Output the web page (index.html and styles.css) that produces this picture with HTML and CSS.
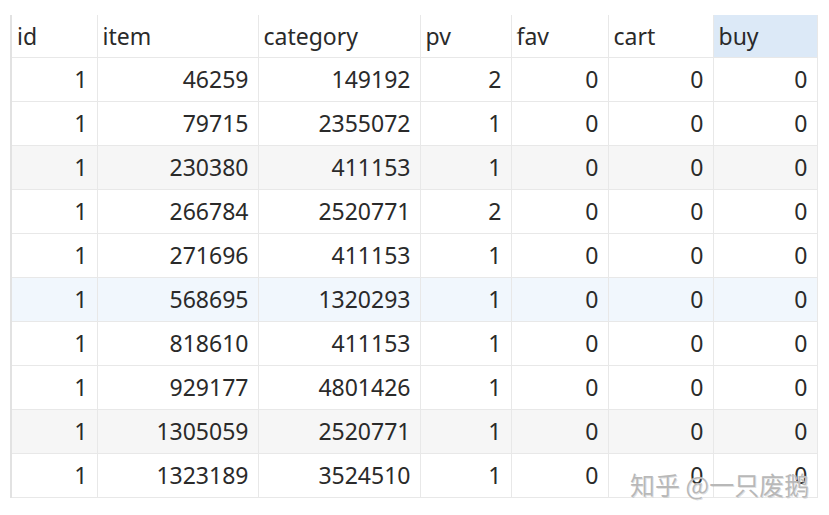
FILE: index.html
```html
<!DOCTYPE html>
<html lang="zh">
<head>
<meta charset="utf-8">
<title>result grid</title>
<link rel="stylesheet" href="styles.css">
</head>
<body>
<div class="page">
  <table class="grid">
    <colgroup>
      <col class="c-id"><col class="c-item"><col class="c-cat"><col class="c-pv"><col class="c-fav"><col class="c-cart"><col class="c-buy">
    </colgroup>
    <thead>
      <tr><th>id</th><th>item</th><th>category</th><th>pv</th><th>fav</th><th>cart</th><th class="sel">buy</th></tr>
    </thead>
    <tbody>
      <tr><td>1</td><td>46259</td><td>149192</td><td>2</td><td>0</td><td>0</td><td>0</td></tr>
      <tr><td>1</td><td>79715</td><td>2355072</td><td>1</td><td>0</td><td>0</td><td>0</td></tr>
      <tr class="alt"><td>1</td><td>230380</td><td>411153</td><td>1</td><td>0</td><td>0</td><td>0</td></tr>
      <tr><td>1</td><td>266784</td><td>2520771</td><td>2</td><td>0</td><td>0</td><td>0</td></tr>
      <tr><td>1</td><td>271696</td><td>411153</td><td>1</td><td>0</td><td>0</td><td>0</td></tr>
      <tr class="hover"><td>1</td><td>568695</td><td>1320293</td><td>1</td><td>0</td><td>0</td><td>0</td></tr>
      <tr><td>1</td><td>818610</td><td>411153</td><td>1</td><td>0</td><td>0</td><td>0</td></tr>
      <tr><td>1</td><td>929177</td><td>4801426</td><td>1</td><td>0</td><td>0</td><td>0</td></tr>
      <tr class="alt"><td>1</td><td>1305059</td><td>2520771</td><td>1</td><td>0</td><td>0</td><td>0</td></tr>
      <tr><td>1</td><td>1323189</td><td>3524510</td><td>1</td><td>0</td><td>0</td><td>0</td></tr>
    </tbody>
  </table>
  <div class="watermark">知乎 @一只废鹅</div>
</div>
</body>
</html>
```
FILE: styles.css
```css
html, body {
  margin: 0;
  padding: 0;
  background: #ffffff;
}
.page {
  position: relative;
  width: 829px;
  height: 515px;
  overflow: hidden;
  padding: 15px 0 0 10px;
  box-sizing: border-box;
  font-family: "Noto Sans", "Noto Sans CJK SC", sans-serif;
  color: #2a2a2a;
}
.grid {
  border-collapse: collapse;
  table-layout: fixed;
  width: 806px;
  font-size: 23px;
}
.c-id { width: 86px; }
.c-item { width: 161px; }
.c-cat { width: 162px; }
.c-pv { width: 91px; }
.c-fav { width: 97px; }
.c-cart { width: 105px; }
.c-buy { width: 104px; }
.grid th, .grid td {
  border: 1px solid #e8e8e8;
  padding: 0;
  white-space: nowrap;
  overflow: hidden;
}
.grid th {
  height: 42px;
  text-align: left;
  font-weight: normal;
  padding-left: 5px;
  border-top: none;
  line-height: 42px;
}
.grid th.sel {
  background: #dce9f7;
}
.grid td {
  height: 43px;
  text-align: right;
  padding-right: 9px;
  line-height: 43px;
}
.grid tr.alt td {
  background: #f6f6f6;
}
.grid tr.hover td {
  background: #f1f7fd;
}
.grid td:first-child, .grid th:first-child {
  border-left: 2px solid #e2e2e2;
}
.watermark {
  position: absolute;
  left: 630px;
  top: 466px;
  font-family: "Noto Sans CJK SC", sans-serif;
  font-size: 25px;
  color: #b8b8b8;
  text-shadow: 0 0 1px #ffffff, 1px 1px 0 rgba(0,0,0,0.12);
}
```
